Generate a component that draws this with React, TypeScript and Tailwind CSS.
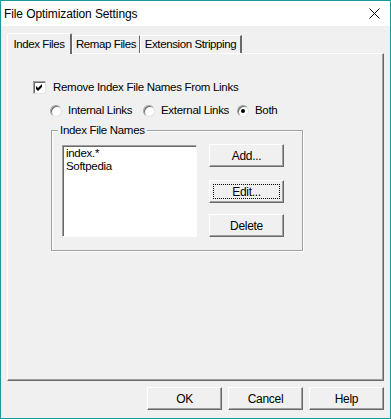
import React from 'react';

const font = { fontFamily: '"Liberation Sans", Arial, sans-serif' };

// Classic 3D push button (Win9x style)
const Btn: React.FC<{ label: string; focused?: boolean; className?: string }> = ({ label, focused, className }) => (
  <div
    className={`h-[23px] w-[75px] bg-[#f0f0f0] border border-t-white border-l-white border-r-[#696969] border-b-[#696969] shadow-[inset_-1px_-1px_0_#a0a0a0] flex items-center justify-center text-[12px] tracking-[-0.3px] text-black ${className ?? ''}`}
  >
    {focused ? (
      <span className="border border-dotted border-black w-[67px] h-[15px] flex items-center justify-center">{label}</span>
    ) : (
      label
    )}
  </div>
);

const Radio: React.FC<{ checked?: boolean }> = ({ checked }) => (
  <span className="relative w-[12px] h-[12px] rounded-full bg-white border border-t-[#a0a0a0] border-l-[#a0a0a0] border-r-[#e3e3e3] border-b-[#e3e3e3] shadow-[inset_1px_1px_0_#696969] flex items-center justify-center">
    {checked && <span className="w-[4px] h-[4px] rounded-full bg-black" />}
  </span>
);

const App: React.FC = () => {
  return (
    <div className="w-[391px] h-[419px] border border-[#17989b] bg-[#f0f0f0] flex flex-col text-black" style={font}>
      {/* Title bar */}
      <div className="h-[25px] bg-white flex items-center justify-between pl-[3px] pr-[8px]">
        <span className="text-[12px] tracking-[-0.1px]">File Optimization Settings</span>
        <svg width="11" height="11" viewBox="0 0 11 11" className="mr-[2px]">
          <path d="M0.5 0.5 L10.5 10.5 M10.5 0.5 L0.5 10.5" stroke="#000" strokeWidth="1" />
        </svg>
      </div>

      {/* Body */}
      <div className="flex-1 flex flex-col px-[6px] pt-[7px]">
        {/* Tabs */}
        <div className="flex items-end h-[20px] text-[11.5px] tracking-[-0.4px]">
          <div className="relative z-10 h-[21px] mb-[-1px] w-[65px] bg-[#f0f0f0] border-t border-l border-white border-r-2 border-r-[#696969] rounded-t-[2px] flex items-start justify-center pt-[2px]">
            Index Files
          </div>
          <div className="h-[18px] w-[68px] border-t border-l border-white border-r border-r-[#696969] flex items-center justify-center">
            Remap Files
          </div>
          <div className="h-[18px] w-[102px] border-t border-l border-white border-r-2 border-r-[#696969] flex items-center justify-center">
            Extension Stripping
          </div>
        </div>

        {/* Panel */}
        <div className="h-[328px] border border-t-white border-l-white border-r-[#696969] border-b-[#696969] shadow-[inset_-1px_-1px_0_#a0a0a0] text-[11.5px] tracking-[-0.3px] pl-[25px] pt-[27px]">
          <div className="flex items-center h-[13px]">
            <span className="w-[13px] h-[13px] bg-white border border-t-[#a0a0a0] border-l-[#a0a0a0] border-r-[#e3e3e3] border-b-[#e3e3e3] shadow-[inset_1px_1px_0_#696969] flex items-center justify-center">
              <svg width="9" height="9" viewBox="0 0 9 9">
                <polygon points="1,3 3,5 7,1 7,4 3,8 1,6" fill="#000" />
              </svg>
            </span>
            <span className="ml-[7px]">Remove Index File Names From Links</span>
          </div>

          <div className="flex items-center h-[13px] mt-[10px] ml-[17px]">
            <Radio />
            <span className="ml-[6px] w-[75px]">Internal Links</span>
            <Radio />
            <span className="ml-[6px] w-[76px]">External Links</span>
            <Radio checked />
            <span className="ml-[6px]">Both</span>
          </div>

          {/* Group box */}
          <div className="relative mt-[13px] ml-[18px] w-[252px] h-[121px] border border-[#a0a0a0] shadow-[1px_1px_0_white,inset_1px_1px_0_white]">
            <span className="absolute -top-[8px] left-[6px] bg-[#f0f0f0] px-[2px] leading-[14px]">Index File Names</span>
            <div className="flex pl-[10px] pt-[14px]">
              <div className="w-[135px] h-[92px] bg-white border border-t-[#a0a0a0] border-l-[#a0a0a0] border-r-white border-b-white shadow-[inset_1px_1px_0_#696969] pl-[3px] pt-[1px] leading-[13px]">
                <div>index.*</div>
                <div>Softpedia</div>
              </div>
              <div className="flex flex-col ml-[12px] -mt-[1px]">
                <Btn label="Add..." />
                <Btn label="Edit..." focused className="mt-[13px]" />
                <Btn label="Delete" className="mt-[11px]" />
              </div>
            </div>
          </div>
        </div>

        {/* Footer buttons */}
        <div className="flex justify-end gap-[6px] mt-[6px]">
          <Btn label="OK" />
          <Btn label="Cancel" />
          <Btn label="Help" />
        </div>
      </div>
    </div>
  );
};

export default App;
